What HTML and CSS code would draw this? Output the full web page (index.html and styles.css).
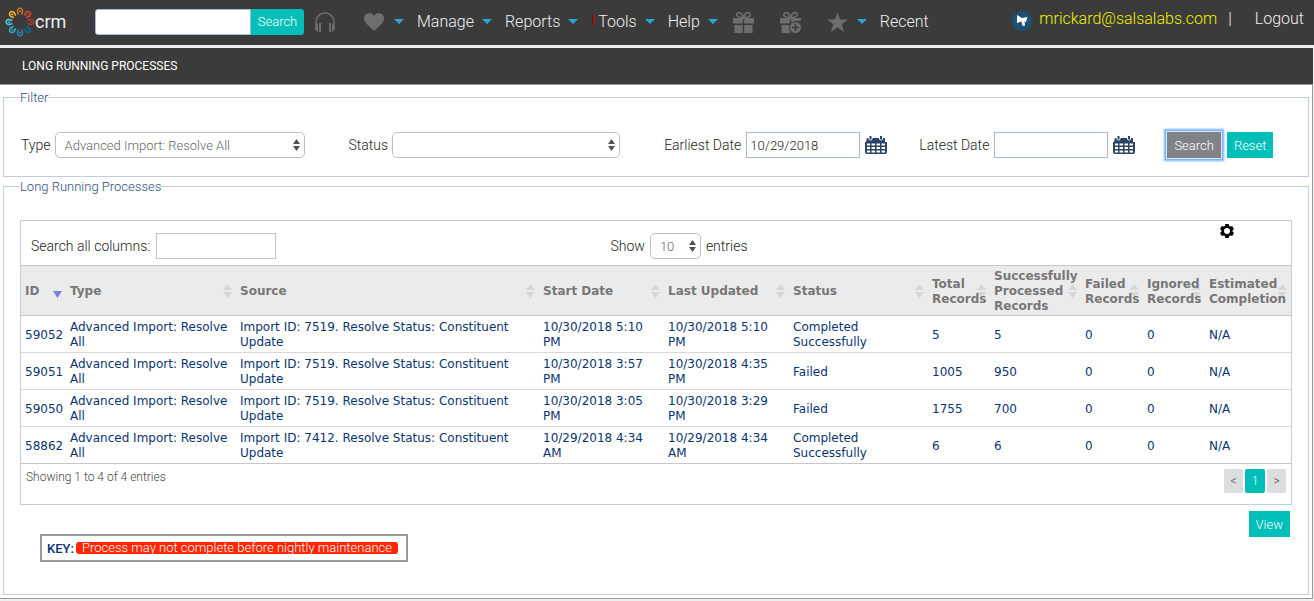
FILE: index.html
```
<!DOCTYPE html>
<html lang="en">
<head>
    <meta charset="utf-8">
    <title>Long Running Processes</title>
    <link rel="stylesheet" href="styles.css">
</head>
<body>
    <svg class="symbols" width="0" height="0">
        <symbol id="person" viewBox="-4 -4 8 8">
            <circle cx="0" cy="0.2" r="1"/>
            <path d="M-1.500 3.500L-2.600 0Q-2.200 -2.800 0 -2.800Q2.200 -2.800 2.600 0L1.500 3.500" fill="none" stroke="currentColor" stroke-width="1.600"/>
        </symbol>
        <symbol id="gift" viewBox="0 0 21 22">
            <path d="M10 6.500C4 6.500 2.500 4 4.500 2.200C7 0.500 9.500 3 10.500 6.500C11.500 3 14 0.500 16.500 2.200C18.500 4 17 6.500 11 6.500" fill="none" stroke="currentColor" stroke-width="1.600"/>
            <path d="M0 7H9.800V12.500H0ZM11.200 7H21V12.500H11.200ZM1.500 14H9.800V22H1.500ZM11.200 14H19.500V22H11.200Z"/>
        </symbol>
        <symbol id="calendar" viewBox="0 0 22 18">
            <path d="M2 2H20V6H22V16Q22 18 20 18H2Q0 18 0 16V6H1Z"/>
            <path d="M2 7.500H5V9.500H2ZM6.500 7.500H10V9.500H6.500ZM11.500 7.500H15V9.500H11.500ZM16.500 7.500H20V9.500H16.500ZM2 11H5V13H2ZM6.500 11H10V13H6.500ZM11.500 11H15V13H11.500ZM16.500 11H20V13H16.500ZM2 14.500H5V16.500H2ZM6.500 14.500H10V16.500H6.500ZM11.500 14.500H15V16.500H11.500ZM16.500 14.500H20V16.500H16.500Z" fill="#fff"/>
            <path d="M3.500 0H7.500V3Q5.500 6 3.500 3ZM14 0H18V3Q16 6 14 3Z" fill="#fff"/>
            <path d="M4.500 0H6.500V3.500H4.500ZM15 0H17V3.500H15Z"/>
        </symbol>
    </svg>

    <header class="topbar">
        <a class="logo" href="#">
            <svg width="30" height="30" viewBox="-15 -15 30 30">
                <g class="fig-orange"><use href="#person" x="-4" y="-15" width="8" height="8"/></g>
                <g class="fig-red" transform="rotate(45)"><use href="#person" x="-4" y="-15" width="8" height="8"/></g>
                <g class="fig-brick" transform="rotate(90)"><use href="#person" x="-4" y="-15" width="8" height="8"/></g>
                <g class="fig-navy" transform="rotate(135)"><use href="#person" x="-4" y="-15" width="8" height="8"/></g>
                <g class="fig-blue" transform="rotate(180)"><use href="#person" x="-4" y="-15" width="8" height="8"/></g>
                <g class="fig-teal" transform="rotate(225)"><use href="#person" x="-4" y="-15" width="8" height="8"/></g>
                <g class="fig-sky" transform="rotate(270)"><use href="#person" x="-4" y="-15" width="8" height="8"/></g>
                <g class="fig-yellow" transform="rotate(315)"><use href="#person" x="-4" y="-15" width="8" height="8"/></g>
            </svg>
            <span>crm</span>
        </a>
        <form class="quick-search">
            <input type="text" aria-label="Search">
            <button type="button">Search</button>
        </form>
        <nav class="menu">
            <a class="icon headphones" href="#" aria-label="Support">
                <svg width="20" height="20" viewBox="0 0 20 20">
                    <path d="M1 14V10A9 9 0 0 1 19 10V14" fill="none" stroke="currentColor" stroke-width="1.500"/>
                    <path d="M3 11.500Q0 12 0 15.500T3 19.500ZM4 11H6V20H4ZM17 11.500Q20 12 20 15.500T17 19.500ZM14 11H16V20H14Z"/>
                </svg>
            </a>
            <a class="icon heart" href="#" aria-label="Favorites">
                <svg width="20" height="18" viewBox="0 0 20 18">
                    <path d="M10 18L2 10.200C-1 7-0.500 2.500 2.500 0.800C5.500-0.700 8.500 0.300 10 3C11.500 0.300 14.500-0.700 17.500 0.800C20.500 2.500 21 7 18 10.200Z"/>
                </svg>
            </a>
            <a class="item" href="#">Manage</a>
            <a class="item" href="#">Reports</a>
            <a class="item" href="#"><span class="alert">!</span>Tools</a>
            <a class="item" href="#">Help</a>
            <i class="caret"></i>
            <a class="icon gift" href="#" aria-label="Gifts"><svg width="21" height="22"><use href="#gift"/></svg></a>
            <a class="icon gift-add" href="#" aria-label="Add gift">
                <svg width="21" height="22" viewBox="0 0 21 22">
                    <use href="#gift" width="21" height="22"/>
                    <path class="plus-gap" d="M21 10V22H12Q8 19 9.500 14Q13 9 21 10Z"/>
                    <circle cx="15.500" cy="16.500" r="5.500"/>
                    <path class="plus" d="M15.500 13V20M12 16.500H19"/>
                </svg>
            </a>
            <a class="icon star" href="#" aria-label="Starred">
                <svg width="21" height="20" viewBox="0 0 21 20">
                    <path d="M10.500 0L13 7.400H21L14.700 12.200L17 20L10.500 15.300L4 20L6.300 12.200L0 7.400H8Z"/>
                </svg>
            </a>
            <a class="item" href="#">Recent</a>
        </nav>
        <div class="account">
            <svg width="20" height="20" viewBox="0 0 20 20">
                <circle cx="10" cy="10" r="10" fill="#1b5274"/>
                <path d="M5 4L10 7L15.500 6L14 11L12.500 10.500L13 14.500L10.500 15L9.500 10.500L5 12Z" fill="#fff"/>
            </svg>
            <a class="email" href="#">mrickard@salsalabs.com</a>
            <span class="divider">|</span>
            <a class="logout" href="#">Logout</a>
        </div>
    </header>

    <main class="page">
        <h1 class="page-title">LONG RUNNING PROCESSES</h1>

        <fieldset class="panel">
            <legend>Filter</legend>
            <form class="filter">
                <div class="field">
                    <label for="type">Type</label>
                    <select id="type" class="select select-type">
                        <option>Advanced Import: Resolve All</option>
                    </select>
                </div>
                <div class="field">
                    <label for="status">Status</label>
                    <select id="status" class="select select-status">
                        <option></option>
                    </select>
                </div>
                <div class="field field-date">
                    <label for="earliest">Earliest Date</label>
                    <input id="earliest" class="date" type="text" value="10/29/2018">
                    <svg class="calendar" width="22" height="18"><use href="#calendar"/></svg>
                </div>
                <div class="field field-date">
                    <label for="latest">Latest Date</label>
                    <input id="latest" class="date" type="text">
                    <svg class="calendar" width="22" height="18"><use href="#calendar"/></svg>
                </div>
                <div class="actions">
                    <button type="button" class="button button-active">Search</button>
                    <button type="button" class="button">Reset</button>
                </div>
            </form>
        </fieldset>

        <fieldset class="panel panel-results">
            <legend>Long Running Processes</legend>
            <div class="grid">
                <div class="grid-top">
                    <div class="grid-search">
                        <label for="search_all">Search all columns:</label>
                        <input id="search_all" type="text">
                    </div>
                    <div class="grid-length">
                        <label for="length">Show</label>
                        <select id="length" class="select select-length">
                            <option>10</option>
                        </select>
                        <span>entries</span>
                    </div>
                    <button type="button" class="gear" aria-label="Settings">
                        <svg width="14" height="14" viewBox="0 0 14 14">
                            <path fill-rule="evenodd" d="M5.300 0H8.700L9.200 1.900L10.300 2.500L12.200 2L14 5L12.600 6.300V7.700L14 9L12.200 12L10.300 11.500L9.200 12.100L8.700 14H5.300L4.800 12.100L3.700 11.500L1.800 12L0 9L1.400 7.700V6.300L0 5L1.800 2L3.700 2.500L4.800 1.900ZM7 4A3 3 0 1 0 7 10A3 3 0 1 0 7 4Z"/>
                        </svg>
                    </button>
                </div>
                <table class="results">
                    <colgroup>
                        <col class="col-id">
                        <col class="col-type">
                        <col>
                        <col class="col-date">
                        <col class="col-date">
                        <col class="col-status">
                        <col class="col-count">
                        <col class="col-success">
                        <col class="col-count">
                        <col class="col-count">
                        <col class="col-estimate">
                    </colgroup>
                    <thead>
                        <tr>
                            <th class="sorted">ID</th>
                            <th>Type</th>
                            <th>Source</th>
                            <th>Start Date</th>
                            <th>Last Updated</th>
                            <th>Status</th>
                            <th>Total Records</th>
                            <th>Successfully Processed Records</th>
                            <th>Failed Records</th>
                            <th>Ignored Records</th>
                            <th>Estimated Completion</th>
                        </tr>
                    </thead>
                    <tbody>
                        <tr>
                            <td>59052</td>
                            <td>Advanced Import: Resolve All</td>
                            <td>Import ID: 7519. Resolve Status: Constituent Update</td>
                            <td>10/30/2018 5:10 PM</td>
                            <td>10/30/2018 5:10 PM</td>
                            <td>Completed Successfully</td>
                            <td>5</td>
                            <td>5</td>
                            <td>0</td>
                            <td>0</td>
                            <td>N/A</td>
                        </tr>
                        <tr>
                            <td>59051</td>
                            <td>Advanced Import: Resolve All</td>
                            <td>Import ID: 7519. Resolve Status: Constituent Update</td>
                            <td>10/30/2018 3:57 PM</td>
                            <td>10/30/2018 4:35 PM</td>
                            <td>Failed</td>
                            <td>1005</td>
                            <td>950</td>
                            <td>0</td>
                            <td>0</td>
                            <td>N/A</td>
                        </tr>
                        <tr>
                            <td>59050</td>
                            <td>Advanced Import: Resolve All</td>
                            <td>Import ID: 7519. Resolve Status: Constituent Update</td>
                            <td>10/30/2018 3:05 PM</td>
                            <td>10/30/2018 3:29 PM</td>
                            <td>Failed</td>
                            <td>1755</td>
                            <td>700</td>
                            <td>0</td>
                            <td>0</td>
                            <td>N/A</td>
                        </tr>
                        <tr>
                            <td>58862</td>
                            <td>Advanced Import: Resolve All</td>
                            <td>Import ID: 7412. Resolve Status: Constituent Update</td>
                            <td>10/29/2018 4:34 AM</td>
                            <td>10/29/2018 4:34 AM</td>
                            <td>Completed Successfully</td>
                            <td>6</td>
                            <td>6</td>
                            <td>0</td>
                            <td>0</td>
                            <td>N/A</td>
                        </tr>
                    </tbody>
                </table>
                <div class="grid-bottom">
                    <span class="info">Showing 1 to 4 of 4 entries</span>
                    <div class="pager">
                        <button type="button">&lt;</button>
                        <button type="button" class="current">1</button>
                        <button type="button">&gt;</button>
                    </div>
                </div>
            </div>
            <div class="below">
                <div class="key"><strong>KEY:</strong><span class="key-warning">Process may not complete before nightly maintenance</span></div>
                <button type="button" class="button">View</button>
            </div>
        </fieldset>
    </main>
</body>
</html>
```
FILE: styles.css
```
* {
    box-sizing: border-box;
}
body {
    margin: 0;
    background: #eeeeee;
    font-family: Roboto, "Liberation Sans", sans-serif;
    font-size: 14px;
    font-weight: 300;
    color: #222222;
}
input, select, button {
    font-family: inherit;
    font-weight: inherit;
    margin: 0;
}
a {
    color: inherit;
    text-decoration: none;
}
label {
    white-space: nowrap;
}
svg {
    display: block;
    fill: currentColor;
    flex: none;
}
.symbols {
    position: absolute;
}

/* top bar */
.topbar {
    display: flex;
    align-items: center;
    height: 45px;
    padding: 0 10px 2px 5px;
    margin-bottom: 3px;
    background: #3b3b3b;
    color: #f0f0f0;
    font-size: 16px;
}
.logo {
    display: flex;
    align-items: center;
    width: 90px;
    font-size: 18px;
    font-weight: 400;
}
.fig-orange { color: #c96f22; }
.fig-red { color: #d8432b; }
.fig-brick { color: #a83a2e; }
.fig-navy { color: #12648a; }
.fig-blue { color: #2385ad; }
.fig-teal { color: #35a5bd; }
.fig-sky { color: #4cbfd6; }
.fig-yellow { color: #f3b21f; }
.quick-search {
    display: flex;
}
.quick-search input {
    width: 156px;
    height: 26px;
    border: 1px solid #a9b8d4;
    border-radius: 3px 0 0 3px;
    background: #ffffff;
}
.quick-search button {
    width: 53px;
    height: 26px;
    padding: 0;
    border: none;
    border-radius: 0 3px 3px 0;
    background: #00bfb8;
    color: #ffffff;
    font-size: 13px;
}
.menu {
    display: flex;
    align-items: center;
    margin-left: 11px;
}
.icon {
    color: #6e6e6e;
}
.heart {
    margin: 0 10px 0 29px;
}
.item {
    display: flex;
    align-items: center;
    margin-right: 8px;
}
.item::before, .caret {
    content: "";
    border: 5px solid transparent;
    border-top-color: #2fa5d4;
    border-bottom: none;
}
.item::before {
    margin-right: 13px;
}
.alert {
    width: 7px;
    color: #c00000;
    font-weight: 400;
}
.gift {
    margin-left: 15px;
}
.gift-add {
    margin: 0 26px;
}
.star {
    margin-right: 9px;
}
.plus-gap {
    fill: #3b3b3b;
}
.plus {
    stroke: #3b3b3b;
    stroke-width: 1.5;
}
.account {
    display: flex;
    align-items: center;
    margin-left: auto;
    padding-bottom: 6px;
}
.account svg {
    margin: 4px 7px 0 0;
}
.email {
    color: #f0f000;
}
.divider {
    margin: 0 23px 0 11px;
}

/* page */
.page {
    margin-right: 1px;
    padding-bottom: 3px;
    border-right: 1px solid #999999;
    border-bottom: 1px solid #999999;
    background: #ffffff;
}
.page-title {
    margin: 0 -1px 5px 0;
    padding: 0 22px;
    border-bottom: 1px solid #999999;
    background: #3b3b3b;
    color: #ffffff;
    font-size: 12px;
    font-weight: 400;
    line-height: 36px;
}
.panel {
    min-width: 0;
    margin: 0 3px;
    padding: 0 16px;
    border: 1px solid #c0cde0;
}
.panel legend {
    padding: 0;
    color: #2a4c80;
    font-size: 13px;
    line-height: 15px;
}
.filter {
    display: flex;
    align-items: center;
    padding: 27px 0 18px 1px;
}
.field {
    display: flex;
    align-items: center;
    gap: 4px;
    margin-right: 44px;
}
.field-date {
    gap: 5px;
    margin-right: 32px;
}
.select {
    appearance: none;
    height: 26px;
    padding: 0 9px;
    border: 1px solid #bfbfbf;
    border-radius: 5px;
    background: #ffffff url("data:image/svg+xml,%3Csvg xmlns='http://www.w3.org/2000/svg' width='7' height='12'%3E%3Cpath d='M0 5L3.500 0L7 5ZM0 7H7L3.500 12Z' fill='%23505050'/%3E%3C/svg%3E") no-repeat right 4px center;
    color: #666666;
    font-size: 13px;
}
.select-type {
    width: 250px;
}
.select-status {
    width: 228px;
}
.select-length {
    width: 51px;
}
.date {
    width: 114px;
    height: 26px;
    padding: 0 3px;
    border: 1px solid #a9b8d4;
    background: #ffffff;
    color: #222222;
    font-size: 13px;
}
.calendar {
    color: #2b4463;
}
.actions {
    display: flex;
    gap: 6px;
}
.button {
    height: 26px;
    padding: 0 7px;
    border: none;
    background: #00bfb8;
    color: #ffffff;
    font-size: 13px;
}
.button-active {
    background: #808285;
    box-shadow: 0 0 0 1px #d8e8ff, 0 0 2px 3px #6fb1ff;
}

/* results */
.panel-results {
    padding-bottom: 32px;
    margin-top: 2px;
}
.grid {
    margin-top: 26px;
    border: 1px solid #c0cde0;
}
.grid-top {
    display: grid;
    grid-template-columns: 1fr auto 1fr;
    align-items: center;
    height: 44px;
    padding-top: 6px;
}
.grid-search {
    display: flex;
    align-items: center;
    gap: 6px;
    padding-left: 10px;
}
.grid-search input {
    width: 120px;
    height: 26px;
    border: 1px solid #c4c4c4;
    background: #ffffff;
}
.grid-length {
    display: flex;
    align-items: center;
    gap: 5px;
    margin-left: 46px;
}
.gear {
    align-self: start;
    justify-self: end;
    margin: -3px 57px 0 0;
    padding: 0;
    border: none;
    background: none;
    color: #000000;
}
.results {
    width: 100%;
    table-layout: fixed;
    border-collapse: collapse;
    font-family: Verdana, "DejaVu Sans", sans-serif;
    font-size: 12px;
    font-weight: 400;
    line-height: 15px;
    color: #0a3470;
}
.col-id { width: 45px; }
.col-type { width: 170px; }
.col-date { width: 125px; }
.col-status { width: 139px; }
.col-count { width: 62px; }
.col-success { width: 91px; }
.col-estimate { width: 86px; }
.results th {
    position: relative;
    z-index: 0;
    height: 50px;
    padding: 3px 0 1px 4px;
    border-top: 1px solid #c8c8c8;
    border-bottom: 1px solid #c8c8c8;
    background: #ebebeb;
    color: #777777;
    text-align: left;
}
.results th::before {
    content: "";
    position: absolute;
    z-index: -1;
    right: 4px;
    top: 18px;
    width: 9px;
    height: 14px;
    background: url("data:image/svg+xml,%3Csvg xmlns='http://www.w3.org/2000/svg' width='9' height='14'%3E%3Cpath d='M0 6L4.500 0L9 6ZM0 8H9L4.500 14Z' fill='%23d6d6d6'/%3E%3C/svg%3E");
}
.results .sorted::before {
    background: url("data:image/svg+xml,%3Csvg xmlns='http://www.w3.org/2000/svg' width='9' height='14'%3E%3Cpath d='M0 7H9L4.500 14Z' fill='%237b80e0'/%3E%3C/svg%3E");
}
.results td {
    height: 37px;
    padding: 4px 0 2px 4px;
    border-bottom: 1px solid #d8d8d8;
}
.results tr:last-child td {
    border-bottom-color: #c8c8c8;
}
.grid-bottom {
    display: flex;
    justify-content: space-between;
    align-items: flex-start;
    height: 40px;
    padding: 5px 5px 0;
}
.info {
    color: #444444;
    font-size: 12px;
    line-height: 17px;
}
.pager {
    display: flex;
    gap: 2px;
}
.pager button {
    width: 19px;
    height: 24px;
    padding: 0;
    border: none;
    border-radius: 2px;
    background: #dcddde;
    color: #555555;
    font-size: 12px;
}
.pager .current {
    width: 20px;
    background: #00bfb8;
    color: #ffffff;
}
.below {
    display: flex;
    justify-content: space-between;
    align-items: flex-start;
    padding: 6px 2px 0 20px;
}
.key {
    display: flex;
    align-items: center;
    gap: 2px;
    height: 28px;
    margin-top: 23px;
    padding: 0 8px 0 5px;
    border: 2px solid #999999;
}
.key strong {
    color: #0a3470;
    font-size: 13px;
    font-weight: 500;
}
.key-warning {
    padding: 0 6px;
    border-radius: 3px;
    background: #ff2600;
    color: #ffffff;
    font-size: 13px;
    line-height: 12px;
}
```
